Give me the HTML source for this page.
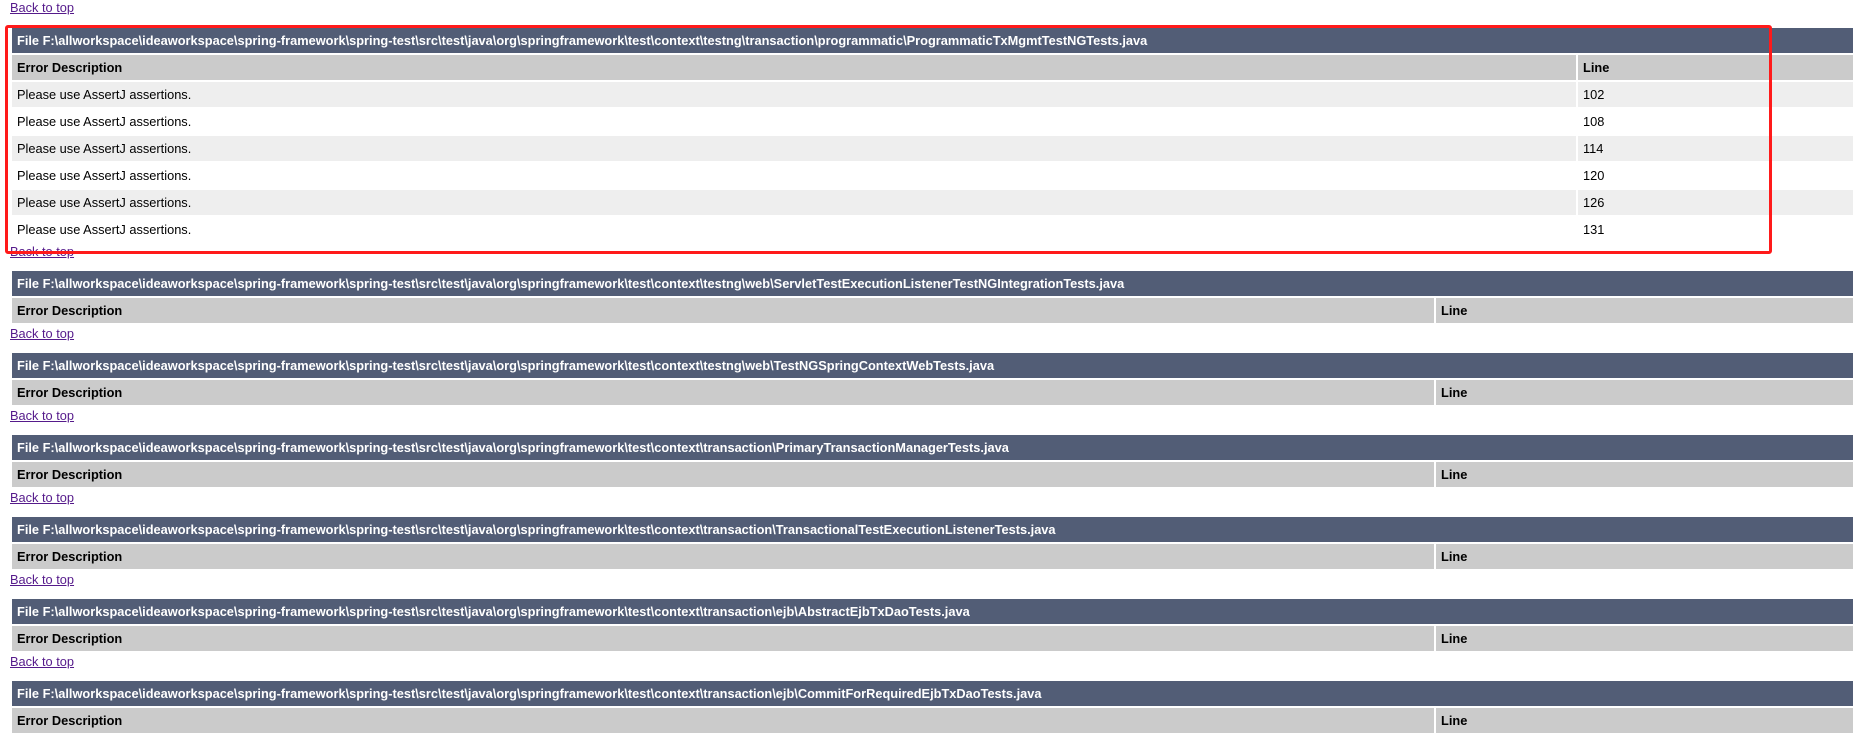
<!DOCTYPE html>
<html><head><meta charset="utf-8"><style>
body{margin:0;width:1853px;height:710px;overflow:hidden;background:#fff;font-family:"Liberation Sans",Arial,sans-serif;font-size:12.8px;position:relative}
a{color:#551a8b;text-decoration:underline;position:absolute;left:10px;font-size:12.8px;line-height:16px}
.t{position:absolute;left:12px;right:0}
.r{position:absolute;left:0;right:0;height:25px;line-height:25px}
.h{background:#525d76;color:#fff;font-weight:bold;padding-left:5px}
.c{position:absolute;top:0;bottom:0;padding-left:5px;box-sizing:border-box}
.th .c{background:#cbcbcb;font-weight:bold;color:#000}
.odd .c{background:#eee}
.box{position:absolute;left:5px;top:25px;width:1761px;height:223px;border:3px solid #ff1a1a;border-radius:3px}
</style></head><body>
<a style="top:0">Back to top</a>
<div class="t" style="top:28px">
<div class="r h" style="top:0">File F:\allworkspace\ideaworkspace\spring-framework\spring-test\src\test\java\org\springframework\test\context\testng\transaction\programmatic\ProgrammaticTxMgmtTestNGTests.java</div>
<div class="r th" style="top:27px"><div class="c" style="left:0;width:1564px">Error Description</div><div class="c" style="left:1566px;right:0">Line</div></div>
<div class="r odd" style="top:54px"><div class="c" style="left:0;width:1564px">Please use AssertJ assertions.</div><div class="c" style="left:1566px;right:0">102</div></div>
<div class="r" style="top:81px"><div class="c" style="left:0;width:1564px">Please use AssertJ assertions.</div><div class="c" style="left:1566px;right:0">108</div></div>
<div class="r odd" style="top:108px"><div class="c" style="left:0;width:1564px">Please use AssertJ assertions.</div><div class="c" style="left:1566px;right:0">114</div></div>
<div class="r" style="top:135px"><div class="c" style="left:0;width:1564px">Please use AssertJ assertions.</div><div class="c" style="left:1566px;right:0">120</div></div>
<div class="r odd" style="top:162px"><div class="c" style="left:0;width:1564px">Please use AssertJ assertions.</div><div class="c" style="left:1566px;right:0">126</div></div>
<div class="r" style="top:189px"><div class="c" style="left:0;width:1564px">Please use AssertJ assertions.</div><div class="c" style="left:1566px;right:0">131</div></div>
</div>
<a style="top:244px">Back to top</a>
<div class="box"></div>

<div class="t" style="top:271px"><div class="r h">File F:\allworkspace\ideaworkspace\spring-framework\spring-test\src\test\java\org\springframework\test\context\testng\web\ServletTestExecutionListenerTestNGIntegrationTests.java</div>
<div class="r th" style="top:27px"><div class="c" style="left:0;width:1422px">Error Description</div><div class="c" style="left:1424px;right:0">Line</div></div></div>
<a style="top:326px">Back to top</a>

<div class="t" style="top:353px"><div class="r h">File F:\allworkspace\ideaworkspace\spring-framework\spring-test\src\test\java\org\springframework\test\context\testng\web\TestNGSpringContextWebTests.java</div>
<div class="r th" style="top:27px"><div class="c" style="left:0;width:1422px">Error Description</div><div class="c" style="left:1424px;right:0">Line</div></div></div>
<a style="top:408px">Back to top</a>

<div class="t" style="top:435px"><div class="r h">File F:\allworkspace\ideaworkspace\spring-framework\spring-test\src\test\java\org\springframework\test\context\transaction\PrimaryTransactionManagerTests.java</div>
<div class="r th" style="top:27px"><div class="c" style="left:0;width:1422px">Error Description</div><div class="c" style="left:1424px;right:0">Line</div></div></div>
<a style="top:490px">Back to top</a>

<div class="t" style="top:517px"><div class="r h">File F:\allworkspace\ideaworkspace\spring-framework\spring-test\src\test\java\org\springframework\test\context\transaction\TransactionalTestExecutionListenerTests.java</div>
<div class="r th" style="top:27px"><div class="c" style="left:0;width:1422px">Error Description</div><div class="c" style="left:1424px;right:0">Line</div></div></div>
<a style="top:572px">Back to top</a>

<div class="t" style="top:599px"><div class="r h">File F:\allworkspace\ideaworkspace\spring-framework\spring-test\src\test\java\org\springframework\test\context\transaction\ejb\AbstractEjbTxDaoTests.java</div>
<div class="r th" style="top:27px"><div class="c" style="left:0;width:1422px">Error Description</div><div class="c" style="left:1424px;right:0">Line</div></div></div>
<a style="top:654px">Back to top</a>

<div class="t" style="top:681px"><div class="r h">File F:\allworkspace\ideaworkspace\spring-framework\spring-test\src\test\java\org\springframework\test\context\transaction\ejb\CommitForRequiredEjbTxDaoTests.java</div>
<div class="r th" style="top:27px"><div class="c" style="left:0;width:1422px">Error Description</div><div class="c" style="left:1424px;right:0">Line</div></div></div>
</body></html>
